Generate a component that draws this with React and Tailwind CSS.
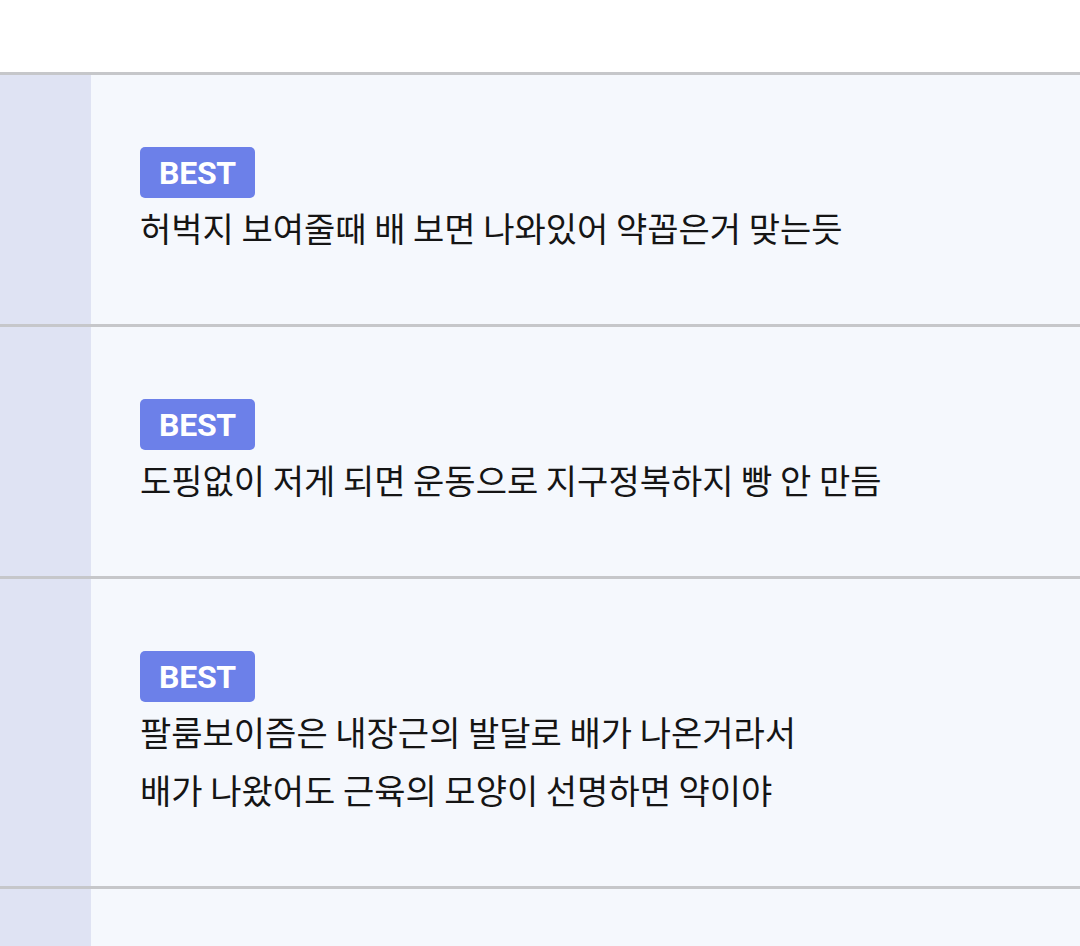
import React from 'react';

const COMMENTS = [
  { id: 1, lines: ['허벅지 보여줄때 배 보면 나와있어 약꼽은거 맞는듯'] },
  { id: 2, lines: ['도핑없이 저게 되면 운동으로 지구정복하지 빵 안 만듬'] },
  { id: 3, lines: ['팔룸보이즘은 내장근의 발달로 배가 나온거라서', '배가 나왔어도 근육의 모양이 선명하면 약이야'] },
  { id: 4, lines: [] },
];

const BestRow = ({ item }) => (
  <div className="flex border-t-[3px] border-[#c6c7ca]">
    <div className="w-[91px] shrink-0 bg-[#dfe3f3]" />
    <div className="flex-1 bg-[#f5f8fd] pl-[49px] pt-[72px] pb-[67px]">
      {item.lines.length > 0 && (
        <>
          <span
            className="inline-flex items-center justify-center w-[115px] h-[51px] rounded-[5px] bg-[#6c80e9] text-white text-[32px] font-bold tracking-[-0.3px]"
            style={{ fontFamily: 'Roboto, "Noto Sans", sans-serif' }}
          >
            BEST
          </span>
          <div className="mt-[1px] text-[34px] leading-[58px] text-[#151515]">
            {item.lines.map((l, i) => (
              <div key={i}>{l}</div>
            ))}
          </div>
        </>
      )}
    </div>
  </div>
);

export default function App() {
  return (
    <div
      className="w-[1080px] h-[946px] overflow-hidden bg-white"
      style={{ fontFamily: '"Noto Sans CJK KR", "Noto Sans", sans-serif' }}
    >
      <div className="h-[72px] bg-white" />
      {COMMENTS.map((c) => (
        <BestRow key={c.id} item={c} />
      ))}
    </div>
  );
}
